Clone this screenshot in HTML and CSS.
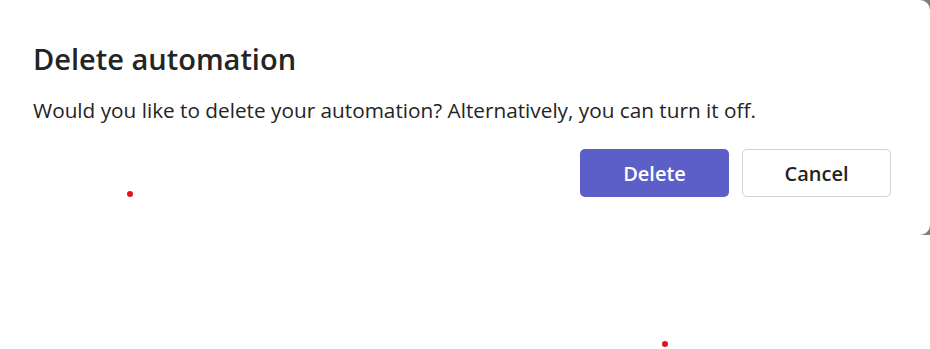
FILE: index.html
```html
<!DOCTYPE html>
<html>
<head>
<meta charset="utf-8">
<link rel="stylesheet" href="styles.css">
</head>
<body>
<div class="backdrop">
  <div class="dialog">
    <h1 class="title">Delete automation</h1>
    <p class="message">Would you like to delete your automation? Alternatively, you can turn it off.</p>
    <div class="actions">
      <button class="btn btn-primary">Delete</button>
      <button class="btn btn-secondary">Cancel</button>
    </div>
  </div>
</div>
<span class="dot dot-a"></span>
<span class="dot dot-b"></span>
</body>
</html>
```
FILE: styles.css
```css
html, body {
  margin: 0;
  padding: 0;
  background: #ffffff;
}
body {
  width: 930px;
  height: 349px;
  position: relative;
  overflow: hidden;
  font-family: "Open Sans", "Noto Sans", sans-serif;
  color: #242424;
}
.backdrop {
  background: #7f7f7f;
  height: 235px;
}
.dialog {
  background: #ffffff;
  height: 235px;
  box-sizing: border-box;
  border-radius: 0 10px 10px 0;
  padding: 41px 39px 0 33px;
  display: flex;
  flex-direction: column;
}
.title {
  margin: 0;
  font-size: 29px;
  line-height: 36px;
  font-weight: 600;
}
.message {
  margin: 19px 0 0;
  font-size: 20.75px;
  line-height: 28px;
  font-weight: 400;
}
.actions {
  display: flex;
  justify-content: flex-end;
  gap: 13px;
  margin-top: 25px;
}
.btn {
  width: 149px;
  height: 48px;
  border-radius: 5px;
  font-family: inherit;
  font-size: 20px;
  font-weight: 600;
  cursor: pointer;
  box-sizing: border-box;
}
.btn-primary {
  background: #5b5fc7;
  color: #ffffff;
  border: none;
}
.btn-secondary {
  background: #ffffff;
  color: #242424;
  border: 1px solid #d1d1d1;
}
.dot {
  position: absolute;
  width: 6px;
  height: 6px;
  border-radius: 50%;
  background: #e81123;
}
.dot-a { left: 127px; top: 191px; }
.dot-b { left: 662px; top: 341px; }
```
